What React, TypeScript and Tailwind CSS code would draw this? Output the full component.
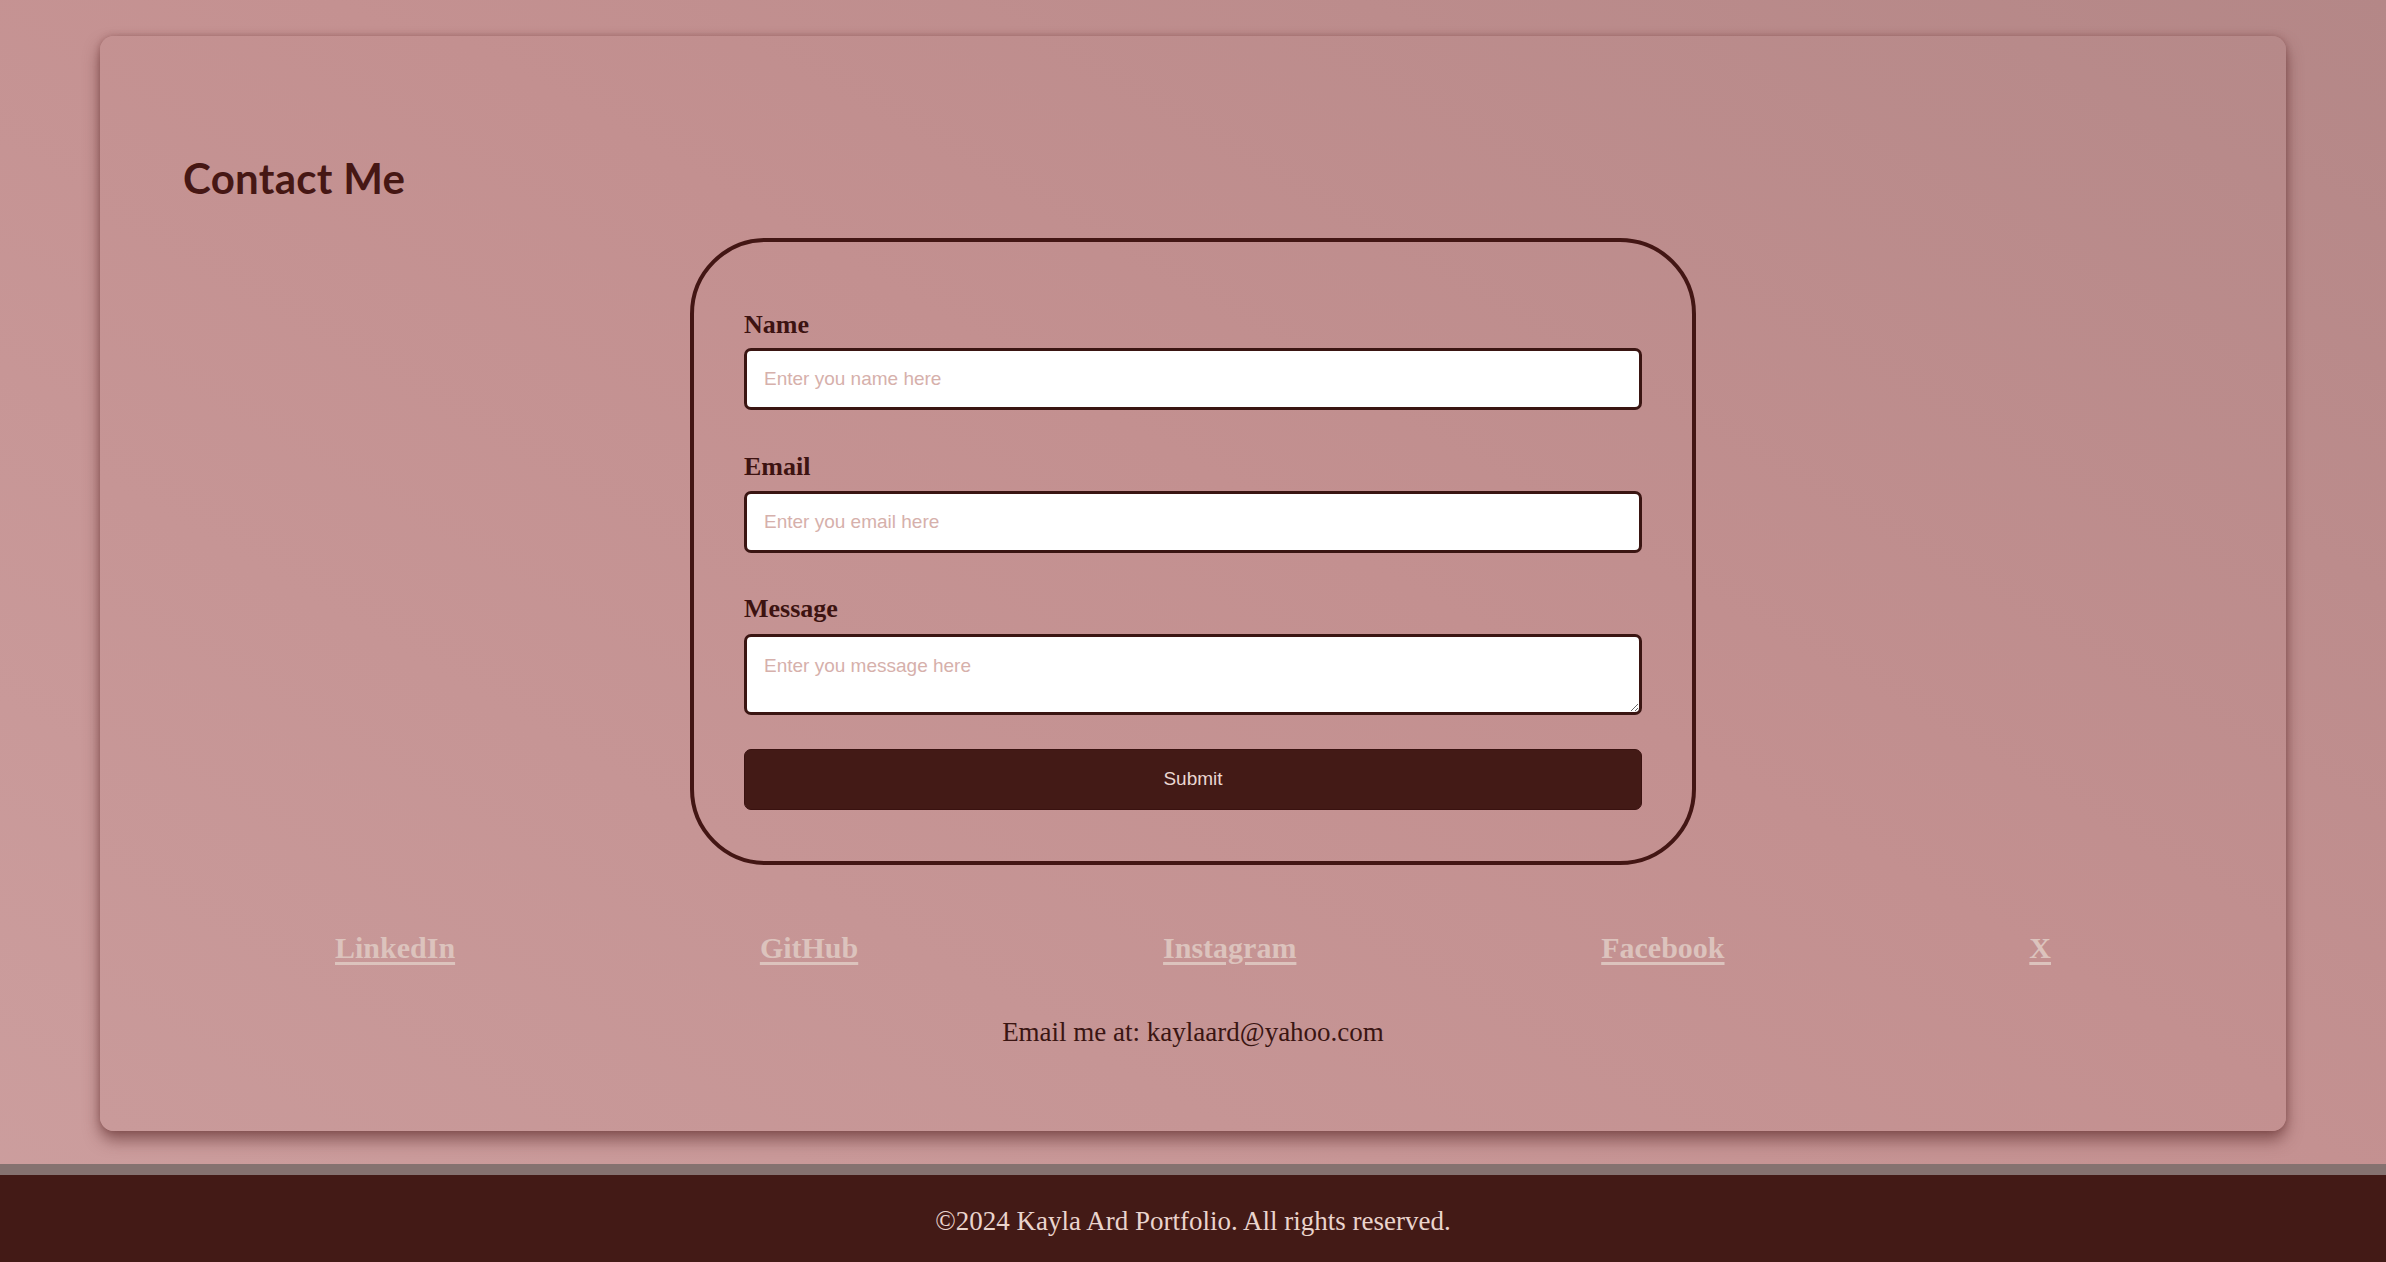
export default function App() {
  const links = ["LinkedIn", "GitHub", "Instagram", "Facebook", "X"];

  return (
    <div className="min-h-[1262px] flex flex-col bg-[linear-gradient(30deg,#cc9e9e_0%,#c49191_55%,#b48787_100%)] font-['Liberation_Serif',serif]">
      {/* main content */}
      <main className="px-[100px] pt-[36px] pb-[33px]">
        <section className="rounded-[14px] bg-[linear-gradient(30deg,#c99a9a_0%,#c39090_55%,#b68989_100%)] shadow-[0_9px_16px_rgba(90,40,40,0.6),0_0_6px_rgba(110,50,50,0.35)] px-[83px] pt-[118px] pb-[84px]">
          <h2 className="font-['Lato',sans-serif] font-bold text-[42px] leading-[48px] text-[#461714] tracking-[0.3px]">
            Contact Me
          </h2>

          <form
            className="mx-auto mt-[36px] w-[1006px] border-[4px] border-[#431614] rounded-[76px] px-[50px] pt-[68px] pb-[51px] flex flex-col"
            onSubmit={(e) => e.preventDefault()}
          >
            <label className="font-bold text-[26px] leading-[30px] text-[#3d1311] mb-[8px]">Name</label>
            <input
              type="text"
              placeholder="Enter you name here"
              className="h-[62px] rounded-[7px] border-[3px] border-[#3a1512] bg-white px-[17px] font-['Liberation_Sans',sans-serif] text-[19px] outline-none placeholder:text-[#d6b0ab]"
            />

            <label className="mt-[42px] font-bold text-[26px] leading-[30px] text-[#3d1311] mb-[9px]">Email</label>
            <input
              type="email"
              placeholder="Enter you email here"
              className="h-[62px] rounded-[7px] border-[3px] border-[#3a1512] bg-white px-[17px] font-['Liberation_Sans',sans-serif] text-[19px] outline-none placeholder:text-[#d6b0ab]"
            />

            <label className="mt-[41px] font-bold text-[26px] leading-[30px] text-[#3d1311] mb-[10px]">Message</label>
            <textarea
              placeholder="Enter you message here"
              className="h-[81px] rounded-[7px] border-[3px] border-[#3a1512] bg-white px-[17px] pt-[17px] font-['Liberation_Sans',sans-serif] text-[19px] leading-[24px] outline-none placeholder:text-[#d6b0ab]"
            />

            <button
              type="submit"
              className="mt-[34px] h-[61px] rounded-[7px] bg-[#431a16] border border-[#3a1210] font-['Liberation_Sans',sans-serif] text-[19px] text-[#ead7d2]"
            >
              Submit
            </button>
          </form>

          {/* social links */}
          <div className="mt-[65px] flex justify-between px-[152px]">
            {links.map((l) => (
              <a key={l} href="#" className="font-bold text-[30px] leading-[36px] text-[#dcc3bd] underline decoration-[3px] underline-offset-[4px]">
                {l}
              </a>
            ))}
          </div>

          <p className="mt-[51px] text-center text-[27px] leading-[30px] text-[#3a1512]">
            Email me at: kaylaard@yahoo.com
          </p>
        </section>
      </main>

      {/* footer */}
      <footer className="mt-auto border-t-[11px] border-[#857270] bg-[#431a16] h-[98px] pt-[31px] text-center">
        <p className="text-[27px] leading-[31px] text-[#ead4cd]">©2024 Kayla Ard Portfolio. All rights reserved.</p>
      </footer>
    </div>
  );
}
